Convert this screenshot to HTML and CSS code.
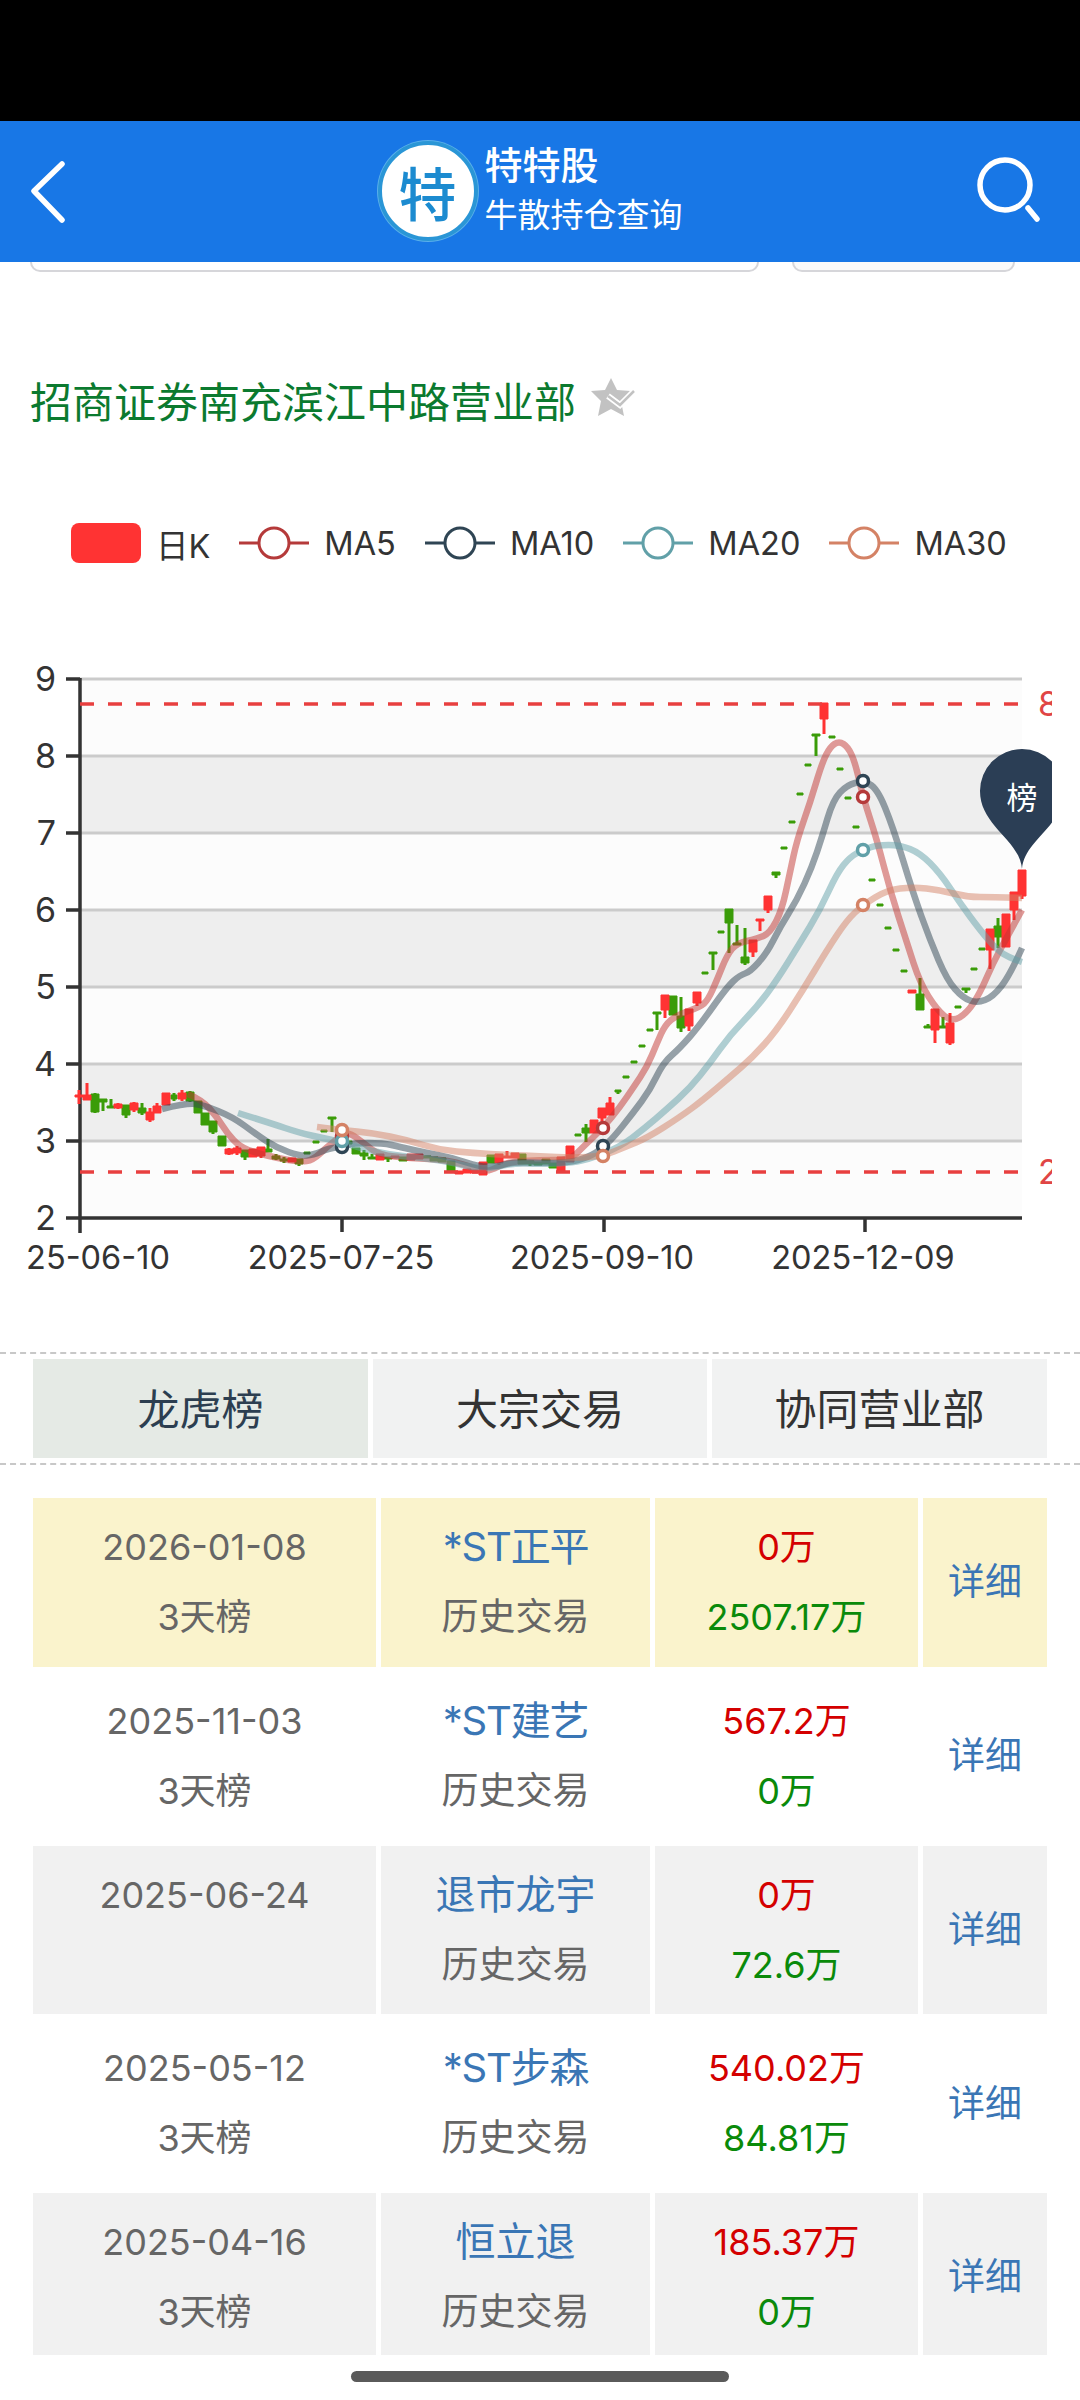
FILE: index.html
```html
<!DOCTYPE html>
<html lang="zh-CN">
<head>
<meta charset="utf-8">
<title>牛散持仓查询</title>
<link rel="stylesheet" href="styles.css">
</head>
<body>
<div class="page">
  <div class="statusbar"></div>
  <header class="topbar">
    <svg class="back" viewBox="0 0 40 64" aria-hidden="true"><path d="M33 5 5 32l28 29" /></svg>
    <div class="brand">
      <div class="logo"><span>特</span></div>
      <div class="brand-text">
        <div class="brand-name">特特股</div>
        <div class="brand-sub">牛散持仓查询</div>
      </div>
    </div>
    <svg class="search" viewBox="0 0 64 68" aria-hidden="true"><circle cx="29" cy="29" r="25" /><path d="M52 52l9 11" /></svg>
  </header>

  <div class="stubs">
    <div class="stub stub-main"></div>
    <div class="stub stub-side"></div>
  </div>

  <h1 class="office">招商证券南充滨江中路营业部
    <svg class="star" viewBox="0 0 46 40" aria-hidden="true">
      <path class="star-fill" d="M21 1l6 12 14 1-10 10 3 15-13-7-13 7 3-15L1 14l14-1z"/>
      <path class="star-gap" d="M18 19l12 9 14-14"/>
      <path class="star-check" d="M18 19l12 9 14-14"/>
    </svg>
  </h1>

  <div class="legend">
    <div class="legend-item"><span class="legend-k"></span><span>日K</span></div>
    <div class="legend-item"><svg class="legend-line ma5" viewBox="0 0 70 36"><path d="M0 18h20M50 18h20"/><circle cx="35" cy="18" r="15"/></svg><span>MA5</span></div>
    <div class="legend-item"><svg class="legend-line ma10" viewBox="0 0 70 36"><path d="M0 18h20M50 18h20"/><circle cx="35" cy="18" r="15"/></svg><span>MA10</span></div>
    <div class="legend-item"><svg class="legend-line ma20" viewBox="0 0 70 36"><path d="M0 18h20M50 18h20"/><circle cx="35" cy="18" r="15"/></svg><span>MA20</span></div>
    <div class="legend-item"><svg class="legend-line ma30" viewBox="0 0 70 36"><path d="M0 18h20M50 18h20"/><circle cx="35" cy="18" r="15"/></svg><span>MA30</span></div>
  </div>

  <svg class="chart" viewBox="0 645 1052 635" width="1052" height="635">
    <rect class="band-a" x="80" y="679" width="942" height="77"/>
    <rect class="band-b" x="80" y="756" width="942" height="77"/>
    <rect class="band-a" x="80" y="833" width="942" height="77"/>
    <rect class="band-b" x="80" y="910" width="942" height="77"/>
    <rect class="band-a" x="80" y="987" width="942" height="77"/>
    <rect class="band-b" x="80" y="1064" width="942" height="77"/>
    <rect class="band-a" x="80" y="1141" width="942" height="77"/>
    <path class="grid" d="M80 679H1022M80 756H1022M80 833H1022M80 910H1022M80 987H1022M80 1064H1022M80 1141H1022"/>
    <path class="axis" d="M80 678V1233M66 679H80M66 756H80M66 833H80M66 910H80M66 987H80M66 1064H80M66 1141H80M66 1218H1022M342 1218V1232M604 1218V1232M865 1218V1232"/>
    <g class="ytick">
      <text x="56" y="691">9</text><text x="56" y="768">8</text><text x="56" y="845">7</text><text x="56" y="922">6</text>
      <text x="56" y="999">5</text><text x="56" y="1076">4</text><text x="56" y="1153">3</text><text x="56" y="1230">2</text>
    </g>
    <g class="xtick">
      <text x="98" y="1269">25-06-10</text><text x="341" y="1269">2025-07-25</text><text x="602" y="1269">2025-09-10</text><text x="863" y="1269">2025-12-09</text>
    </g>

    <path class="wick-down" d="M95 1093V1113M103 1099V1111M111 1099V1108M126 1105V1118M142 1103V1115M174 1093V1101M190 1091V1102M213 1121V1134M245 1150V1160M268 1139V1151M276 1154V1160M284 1157V1163M299 1159V1166M332 1117V1132M364 1150V1160M372 1154V1159M388 1157V1162M530 1161V1166M586 1124V1142M657 1013V1030M681 997V1032M713 953V970M729 923V953M737 925V945M745 928V965M816 735V756M920 978V994M943 1017V1028M966 990V993M998 918V948M618 1092V1094M776 875V878M928 1024V1027"/>
    <path class="body-down" d="M91 1094h8V1112h-8zM99 1099h8V1102h-8zM107 1106h8V1108h-8zM122 1105h8V1115h-8zM138 1108h8V1113h-8zM171 1095h6V1099h-6zM186 1092h8V1101h-8zM194 1101h8V1113h-8zM201 1113h8V1125h-8zM209 1121h8V1132h-8zM218 1136h8V1146h-8zM241 1150h8V1157h-8zM264 1149h8V1152h-8zM272 1156h8V1159h-8zM280 1159h8V1161h-8zM295 1159h8V1164h-8zM304 1152h6V1154h-6zM313 1141h6V1143h-6zM321 1130h6V1132h-6zM328 1117h8V1119h-8zM344 1141h8V1144h-8zM352 1148h8V1154h-8zM360 1153h8V1156h-8zM368 1157h8V1159h-8zM384 1157h8V1159h-8zM399 1157h8V1161h-8zM423 1156h8V1158h-8zM430 1157h8V1161h-8zM438 1158h8V1162h-8zM447 1161h8V1171h-8zM487 1155h8V1163h-8zM518 1154h8V1164h-8zM526 1161h8V1164h-8zM534 1162h8V1165h-8zM542 1159h8V1164h-8zM549 1163h8V1168h-8zM575 1134h6V1136h-6zM582 1128h8V1133h-8zM615 1090h6V1092h-6zM623 1076h6V1078h-6zM631 1061h6V1063h-6zM639 1045h6V1047h-6zM647 1029h6V1031h-6zM653 1012h8V1014h-8zM669 996h8V1015h-8zM677 1016h8V1028h-8zM702 972h6V974h-6zM709 952h8V954h-8zM718 931h6V933h-6zM725 909h8V923h-8zM733 943h8V945h-8zM741 957h8V963h-8zM772 872h8V875h-8zM781 847h6V849h-6zM789 821h6V823h-6zM797 793h6V795h-6zM805 764h6V766h-6zM812 734h8V736h-8zM829 736h6V738h-6zM837 768h6V770h-6zM845 797h6V799h-6zM853 826h6V828h-6zM861 853h6V855h-6zM869 879h6V881h-6zM877 904h6V906h-6zM885 927h6V929h-6zM893 949h6V951h-6zM901 970h6V972h-6zM916 994h8V1010h-8zM924 1026h8V1028h-8zM939 1026h8V1028h-8zM955 1006h6V1008h-6zM962 988h8V990h-8zM971 968h6V970h-6zM979 948h6V950h-6zM994 926h8V937h-8z"/>
    <path class="wick-up" d="M79 1090V1104M87 1083V1100M118 1103V1109M134 1102V1112M150 1108V1122M157 1103V1113M182 1090V1101M229 1148V1155M237 1146V1155M261 1147V1158M507 1151V1158M499 1154V1165M602 1118V1121M610 1097V1103M665 1010V1018M689 1026V1031M697 1003V1006M753 952V957M760 919V931M768 910V913M824 719V734M935 1030V1043M950 1013V1045M990 950V969M1014 910V920M1022 896V899"/>
    <path class="body-up" d="M75 1095h8V1097h-8zM83 1095h8V1100h-8zM114 1104h8V1108h-8zM130 1103h8V1110h-8zM146 1112h8V1120h-8zM153 1106h8V1113h-8zM162 1093h8V1105h-8zM178 1093h8V1099h-8zM225 1149h8V1154h-8zM233 1148h8V1153h-8zM249 1149h8V1157h-8zM257 1147h8V1156h-8zM288 1158h8V1162h-8zM376 1154h8V1160h-8zM391 1156h8V1158h-8zM407 1154h8V1160h-8zM415 1154h8V1159h-8zM455 1171h8V1174h-8zM463 1169h8V1173h-8zM470 1170h8V1173h-8zM479 1162h8V1175h-8zM495 1154h8V1163h-8zM503 1156h8V1158h-8zM511 1153h8V1158h-8zM557 1157h8V1171h-8zM566 1146h8V1162h-8zM590 1120h8V1133h-8zM598 1108h8V1118h-8zM606 1103h8V1115h-8zM661 995h8V1010h-8zM685 1009h8V1026h-8zM693 992h8V1003h-8zM749 940h8V952h-8zM756 919h8V921h-8zM764 896h8V910h-8zM820 703h8V719h-8zM908 990h8V993h-8zM931 1009h8V1030h-8zM946 1023h8V1043h-8zM986 929h8V950h-8zM1002 914h8V947h-8zM1010 892h8V910h-8zM1018 870h8V896h-8z"/>

    <path class="line line-ma5" d="M188 1094Q202 1100 209.500 1108.500Q217 1117 222 1125Q227 1133 233.500 1140Q240 1147 248.500 1150Q257 1153 267 1155.500Q277 1158 288.500 1160Q300 1162 306.500 1161Q313 1160 320 1153.500Q327 1147 334.500 1141Q342 1135 346 1134Q350 1133 357.500 1138.500Q365 1144 372 1149.500Q379 1155 394.500 1156.500Q410 1158 429 1159Q448 1160 465 1165Q482 1170 486 1170.500Q490 1171 498.500 1166.500Q507 1162 523.500 1161Q540 1160 555 1160Q570 1160 576.500 1153.500Q583 1147 593 1137.500Q603 1128 611.500 1117.500Q620 1107 626.500 1097.500Q633 1088 640 1077.500Q647 1067 652 1055Q657 1043 661 1034Q665 1025 671 1020Q677 1015 688.500 1011Q700 1007 704 1003.500Q708 1000 712.500 990Q717 980 722 967.500Q727 955 732 949Q737 943 747 941Q757 939 763.500 936Q770 933 776 921.500Q782 910 786 891Q790 872 793.500 856Q797 840 803.500 821.500Q810 803 816 783Q822 763 826 755Q830 747 834.500 744Q839 741 843.500 744Q848 747 851.500 754.500Q855 762 859 779.500Q863 797 870 818.500Q877 840 883.500 865Q890 890 898.500 916.500Q907 943 913.500 963Q920 983 928.500 996.500Q937 1010 944.500 1016Q952 1022 959.500 1017.500Q967 1013 973.500 1003Q980 993 986.500 978Q993 963 1000 950Q1007 937 1022 910"/>
    <path class="line line-ma10" d="M162 1109Q187 1103 195 1104Q203 1105 218 1111Q233 1117 245 1126Q257 1135 267 1141.500Q277 1148 288.500 1152Q300 1156 306.500 1155.500Q313 1155 321.500 1151.500Q330 1148 336 1147.500Q342 1147 347.500 1145Q353 1143 368 1143Q383 1143 391.500 1145Q400 1147 413.500 1150Q427 1153 440 1155.500Q453 1158 466.500 1162.500Q480 1167 490 1166.500Q500 1166 506.500 1164Q513 1162 530 1162.500Q547 1163 560 1162.500Q573 1162 583 1158.500Q593 1155 598 1151Q603 1147 608 1142.500Q613 1138 623 1125.500Q633 1113 641.500 1101.500Q650 1090 656.500 1076.500Q663 1063 671.500 1055.500Q680 1048 690 1036.500Q700 1025 713.500 1006Q727 987 733.500 981Q740 975 745 973.500Q750 972 758.500 962.500Q767 953 773.500 940Q780 927 788.500 913.500Q797 900 804.500 883.500Q812 867 817 852Q822 837 827.500 818.500Q833 800 840 792.500Q847 785 855 783Q863 781 870 784.500Q877 788 885 807.500Q893 827 903 860Q913 893 921.500 916.500Q930 940 938.500 960Q947 980 955 989Q963 998 970 1000.500Q977 1003 985 1000Q993 997 1001.500 986Q1010 975 1022 948"/>
    <path class="line line-ma20" d="M238 1113Q270 1123 285 1128Q300 1133 311.500 1135.500Q323 1138 332 1140Q341 1142 350.500 1145Q360 1148 375 1151.500Q390 1155 406.500 1156.500Q423 1158 436.500 1160Q450 1162 466.500 1166Q483 1170 498 1166.500Q513 1163 526.500 1163.500Q540 1164 553.500 1163.500Q567 1163 577 1161.500Q587 1160 603.500 1153.500Q620 1147 632.500 1137.500Q645 1128 656 1118.500Q667 1109 678.500 1098.500Q690 1088 700 1075.500Q710 1063 720 1049Q730 1035 743.500 1021Q757 1007 767 993.500Q777 980 788.500 961.500Q800 943 810 926.500Q820 910 828.500 891.500Q837 873 843.500 865Q850 857 856.500 853.500Q863 850 870 847.500Q877 845 888.500 845Q900 845 910 849Q920 853 930 863Q940 873 950 888Q960 903 970 916.500Q980 930 988.500 940Q997 950 1003.500 954Q1010 958 1022 962"/>
    <path class="line line-ma30" d="M317 1127L329 1128.500Q341 1130 357 1131.500Q373 1133 390 1136.500Q407 1140 423.500 1145Q440 1150 456.500 1151.500Q473 1153 490 1154Q507 1155 523.500 1155.500Q540 1156 556.500 1157Q573 1158 588 1157Q603 1156 614 1151.500Q625 1147 636 1142.500Q647 1138 663.500 1127.500Q680 1117 691.500 1108.500Q703 1100 716.500 1088.500Q730 1077 741.500 1067Q753 1057 765 1043.500Q777 1030 790 1010Q803 990 815 970Q827 950 837 935Q847 920 855 912.500Q863 905 875 897.500Q887 890 900 888.500Q913 887 926.500 888.500Q940 890 953.500 893.500Q967 897 980 897Q993 897 1022 898"/>

    <path class="mark-line" d="M80 704H1022M80 1172H1022"/>
    <g class="mark-label"><text x="1038" y="716">8</text><text x="1038" y="1184">2</text></g>

    <g class="dot">
      <circle class="dot-ma10" cx="342" cy="1147" r="5.500"/><circle class="dot-ma5" cx="342" cy="1136" r="5.500"/><circle class="dot-ma20" cx="342" cy="1141" r="5.500"/><circle class="dot-ma30" cx="342" cy="1130" r="5.500"/>
      <circle class="dot-ma5" cx="603" cy="1128" r="5.500"/><circle class="dot-ma10" cx="603" cy="1146" r="5.500"/><circle class="dot-ma30" cx="603" cy="1156" r="5.500"/>
      <circle class="dot-ma10" cx="863" cy="781" r="5.500"/><circle class="dot-ma5" cx="863" cy="797" r="5.500"/><circle class="dot-ma20" cx="863" cy="850" r="5.500"/><circle class="dot-ma30" cx="863" cy="905" r="5.500"/>
    </g>

    <path class="pin" d="M1022 869C1020 840 980 826 980 791A42 42 0 1 1 1064 791C1064 826 1024 840 1022 869Z"/>
    <text class="pin-text" x="1022" y="809">榜</text>
  </svg>

  <nav class="tabs">
    <div class="tab tab-active">龙虎榜</div>
    <div class="tab">大宗交易</div>
    <div class="tab">协同营业部</div>
  </nav>

  <div class="rows">
    <div class="row row-hot">
      <div class="cell date"><div>2026-01-08</div><div>3天榜</div></div>
      <div class="cell"><div class="link name st">*ST正平</div><div class="muted">历史交易</div></div>
      <div class="cell"><div class="rise">0万</div><div class="fall">2507.17万</div></div>
      <div class="cell cell-detail link">详细</div>
    </div>
    <div class="row">
      <div class="cell date"><div>2025-11-03</div><div>3天榜</div></div>
      <div class="cell"><div class="link name st">*ST建艺</div><div class="muted">历史交易</div></div>
      <div class="cell"><div class="rise">567.2万</div><div class="fall">0万</div></div>
      <div class="cell cell-detail link">详细</div>
    </div>
    <div class="row row-alt">
      <div class="cell date"><div>2025-06-24</div></div>
      <div class="cell"><div class="link name">退市龙宇</div><div class="muted">历史交易</div></div>
      <div class="cell"><div class="rise">0万</div><div class="fall">72.6万</div></div>
      <div class="cell cell-detail link">详细</div>
    </div>
    <div class="row">
      <div class="cell date"><div>2025-05-12</div><div>3天榜</div></div>
      <div class="cell"><div class="link name st">*ST步森</div><div class="muted">历史交易</div></div>
      <div class="cell"><div class="rise">540.02万</div><div class="fall">84.81万</div></div>
      <div class="cell cell-detail link">详细</div>
    </div>
    <div class="row row-alt">
      <div class="cell date"><div>2025-04-16</div><div>3天榜</div></div>
      <div class="cell"><div class="link name">恒立退</div><div class="muted">历史交易</div></div>
      <div class="cell"><div class="rise">185.37万</div><div class="fall">0万</div></div>
      <div class="cell cell-detail link">详细</div>
    </div>
  </div>

  <div class="navbar"><div class="home-pill"></div></div>
</div>
</body>
</html>
```

FILE: styles.css
```css
* { box-sizing: border-box; }
html, body { margin: 0; padding: 0; background: #fff; }
body { font-family: Inter, "Noto Sans CJK SC", sans-serif; color: #333; }
.page { width: 1080px; height: 2400px; overflow: hidden; display: flex; flex-direction: column; }

.statusbar { height: 121px; background: #000; flex: none; }
.topbar { height: 141px; flex: none; background: #1877e6; display: flex; align-items: center; justify-content: space-between; padding: 0 40px 0 29px; color: #fff; }
.back { width: 40px; height: 64px; margin-top: -2px; fill: none; stroke: #fff; stroke-width: 5.5; stroke-linecap: round; stroke-linejoin: round; }
.search { width: 64px; height: 68px; margin-top: -4px; fill: none; stroke: #fff; stroke-width: 5.5; stroke-linecap: round; }
.brand { display: flex; align-items: center; gap: 7px; margin-right: -15px; margin-top: -1px; }
.logo { width: 100px; height: 100px; border-radius: 50%; background: #fff; border: 4px solid #2a96d6; box-shadow: 0 0 0 1px #5ab0ea; display: flex; align-items: center; justify-content: center; color: #1c8bd0; font: 500 58px/1 "Noto Sans CJK SC", sans-serif; }
.brand-text { display: flex; flex-direction: column; font-family: "Noto Sans CJK SC", sans-serif; margin-top: -7px; }
.brand-name { font-size: 38px; line-height: 50px; font-weight: 500; }
.brand-sub { font-size: 33px; line-height: 50px; }

.stubs { height: 10px; flex: none; display: flex; padding-left: 30px; }
.stub { height: 10px; border: 2px solid #d6d6da; border-top: 0; border-radius: 0 0 14px 14px; }
.stub-main { width: 729px; background: #fff; }
.stub-side { width: 223px; margin-left: 33px; background: #fafafa; }

.office { margin: 103px 0 0 30px; height: 50px; display: flex; align-items: center; gap: 14px; font: 400 42px/50px "Noto Sans CJK SC", sans-serif; color: #0b7a2f; flex: none; }
.star { width: 46px; height: 40px; margin-top: -6px; }
.star-fill { fill: #c2c2c2; }
.star-gap { fill: none; stroke: #fff; stroke-width: 6; }
.star-check { fill: none; stroke: #c2c2c2; stroke-width: 2.5; }

.legend { margin: 98px 0 0 71px; height: 40px; display: flex; align-items: center; gap: 29px; flex: none; font-size: 32.5px; color: #333; }
.legend-item { display: flex; align-items: center; gap: 15px; }
.legend-item:first-child { gap: 15px; }
.legend-k { width: 70px; height: 40px; border-radius: 8px; background: #ff3333; }
.legend-line { width: 70px; height: 36px; fill: #fff; stroke-width: 3; overflow: visible; }
.ma5 { stroke: #b53a3a; }
.ma10 { stroke: #2f4554; }
.ma20 { stroke: #61a0a8; }
.ma30 { stroke: #d48265; }

.chart { display: block; margin-top: 82px; flex: none; overflow: hidden; }
.band-a { fill: #fcfcfc; }
.band-b { fill: #eeeeee; }
.grid { fill: none; stroke: #cbcbcb; stroke-width: 3; }
.axis { fill: none; stroke: #333; stroke-width: 3.5; }
.ytick text { font-size: 34px; text-anchor: end; fill: #333; }
.xtick text { font-size: 32.5px; text-anchor: middle; fill: #333; }
.body-up { fill: #ff3333; stroke: #ff3333; stroke-width: 1; }
.body-down { fill: #3a9c08; stroke: #3a9c08; stroke-width: 1; }
.wick-up { fill: none; stroke: #ff3333; stroke-width: 3; }
.wick-down { fill: none; stroke: #3a9c08; stroke-width: 3; }
.line { fill: none; stroke-width: 6.5; stroke-opacity: 0.5; stroke-linejoin: round; }
.line-ma5 { stroke: #c23531; }
.line-ma10 { stroke: #2f4554; }
.line-ma20 { stroke: #61a0a8; }
.line-ma30 { stroke: #d48265; }
.mark-line { fill: none; stroke: #e83f3f; stroke-width: 3.5; stroke-dasharray: 14 14; }
.mark-label text { font-size: 34px; fill: #e04545; }
.dot circle { fill: #fff; stroke-width: 3.5; }
.dot-ma5 { stroke: #b53a3a; }
.dot-ma10 { stroke: #2f4554; }
.dot-ma20 { stroke: #61a0a8; }
.dot-ma30 { stroke: #d48265; }
.pin { fill: #2b3e55; }
.pin-text { font: 400 31px "Noto Sans CJK SC", sans-serif; fill: #fff; text-anchor: middle; }

.tabs { margin-top: 72px; height: 113px; flex: none; border-top: 2px dashed #c8c8c8; border-bottom: 2px dashed #c8c8c8; padding: 5px 33px; display: grid; grid-template-columns: 335px 334px 335px; gap: 5px; }
.tab { background: #f1f2f2; display: flex; align-items: center; justify-content: center; padding-bottom: 4px; font: 400 42px "Noto Sans CJK SC", sans-serif; color: #333; }
.tab-active { background: #e5eae5; color: #2c3e50; }

.rows { margin-top: 33px; padding: 0 33px; display: flex; flex-direction: column; gap: 5px; flex: 1; min-height: 0; overflow: hidden; }
.row { display: grid; grid-template-columns: 343px 269px 263px 124px; gap: 5px; height: 168.75px; flex: none; font-size: 36px; line-height: 70px; text-align: center; }
.cell { padding-top: 14px; }
.cell-detail { padding-top: 0; display: flex; align-items: center; justify-content: center; font-size: 37px; }
.row-hot .cell { background: #faf3cc; }
.row-alt .cell { background: #f1f1f1; }
.date { color: #666; }
.muted { color: #666; font-size: 37px; }
.link { color: #3a76b5; }
.name { font-size: 40px; }
.st { letter-spacing: -1.2px; }
.rise { color: #d40000; }
.fall { color: #0a8a0a; }

.navbar { height: 45px; flex: none; background: #fff; display: flex; justify-content: center; padding-top: 16px; }
.home-pill { width: 378px; height: 11px; border-radius: 6px; background: #5a5a5a; }
```
